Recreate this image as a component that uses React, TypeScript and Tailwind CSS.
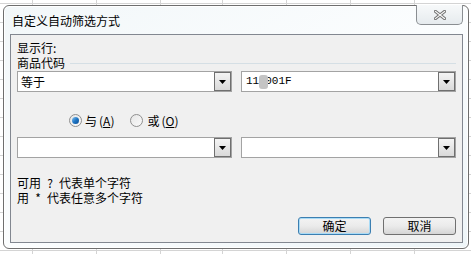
import React from "react";

const cjk = '"Noto Sans CJK SC", "Noto Sans", sans-serif';

function DropBtn() {
  return (
    <div className="w-[17px] h-[19px] shrink-0 border border-[#6f6f6f] bg-gradient-to-b from-[#f4f4f4] to-[#d9d9d9] flex items-center justify-center">
      <svg width="7" height="4" viewBox="0 0 7 4">
        <path d="M0 0H7L3.5 4Z" fill="#000" />
      </svg>
    </div>
  );
}

function Combo({ children }: { children?: React.ReactNode }) {
  return (
    <div className="w-[215px] h-[21px] border border-[#a3a3a3] bg-white flex items-center justify-between pl-[3px]">
      <div className="flex items-center text-[12px] leading-[14px] text-black">{children}</div>
      <DropBtn />
    </div>
  );
}

function Radio({ checked }: { checked?: boolean }) {
  return (
    <div className="w-[13px] h-[13px] rounded-full border border-[#8f8f8f] bg-gradient-to-br from-[#e6e6e6] to-[#fafafa] flex items-center justify-center">
      {checked && (
        <div className="w-[7px] h-[7px] rounded-full bg-gradient-to-br from-[#7fc4f2] via-[#1f76c4] to-[#0b4e95]" />
      )}
    </div>
  );
}

function Button({ label, focused }: { label: string; focused?: boolean }) {
  return (
    <div
      className={
        "w-[73px] h-[18px] rounded-[3px] border flex items-center justify-center text-[12px] leading-[14px] text-black bg-gradient-to-b from-[#f3f3f3] via-[#ebebeb] to-[#d5d5d5] " +
        (focused ? "border-[#3c7fb1] shadow-[inset_0_0_0_1px_#a9dbf6]" : "border-[#707070]")
      }
    >
      {label}
    </div>
  );
}

function Half({ children }: { children?: React.ReactNode }) {
  return <span className="inline-block w-[6px] text-center">{children}</span>;
}

function Grid() {
  const cols = [32, 96, 160, 222, 286, 350, 414];
  const rows: number[] = [];
  for (let y = 3; y < 254; y += 19) rows.push(y);
  return (
    <svg className="absolute inset-0" width="471" height="254">
      {cols.map((x) => (
        <line key={"c" + x} x1={x + 0.5} y1="0" x2={x + 0.5} y2="254" stroke="#d4d4d4" />
      ))}
      {rows.map((y) => (
        <line key={"r" + y} x1="0" y1={y + 0.5} x2="471" y2={y + 0.5} stroke="#d4d4d4" />
      ))}
    </svg>
  );
}

export default function App() {
  return (
    <div className="relative w-[471px] h-[254px] overflow-hidden bg-white" style={{ fontFamily: cjk }}>
      <Grid />
      {/* window */}
      <div className="absolute left-[3px] top-[5px] w-[466px] h-[244px] rounded-[6px] border border-[#6e6e6e] bg-gradient-to-br from-[#f2f7f9] via-[#fbfdfe] to-[#eef5f8] shadow-[inset_0_0_0_1px_#ffffff] flex flex-col pl-[6px] pr-[5px] pb-[5px]">
        {/* title bar */}
        <div className="relative h-[28px] shrink-0 flex items-center pl-[2px] pt-[1px]">
          <span className="text-[12px] leading-[14px] text-black">自定义自动筛选方式</span>
          <div className="absolute right-[0px] top-[-1px] w-[47px] h-[20px] rounded-b-[5px] border border-t-0 border-[#8a8e92] bg-gradient-to-b from-[#f7f9fa] to-[#e6ebee] flex items-center justify-center">
            <svg width="12" height="10" viewBox="0 0 12 10">
              <path d="M1.5 1.5L10.5 8.5M10.5 1.5L1.5 8.5" stroke="#737373" strokeWidth="3.2" strokeLinecap="square" />
              <path d="M1.5 1.5L10.5 8.5M10.5 1.5L1.5 8.5" stroke="#fafafa" strokeWidth="1.2" strokeLinecap="square" />
            </svg>
          </div>
        </div>
        {/* client */}
        <div className="flex-1 border border-[#828790] bg-[#f0f0f0] px-[6px] pt-[5px] flex flex-col text-[12px] leading-[15px] text-black">
          <div>显示行:</div>
          <div className="flex items-center">
            <span>商品代码</span>
            <div className="flex-1 h-px bg-[#d5dfe5] ml-[5px] mt-[1px]" />
          </div>
          <div className="flex gap-[9px] mt-[1px]">
            <Combo>等于</Combo>
            <Combo>
              <span className="relative pl-[1px]" style={{ fontFamily: '"Liberation Mono", monospace', fontSize: "11px" }}>
                11
                <span className="inline-block w-[9px] h-[14px] align-middle rounded-[3px] bg-[#c4c4c4] -mr-[3px] relative z-10" />
                001F
              </span>
            </Combo>
          </div>
          <div className="flex items-center mt-[20px] pl-[52px] h-[16px]">
            <Radio checked />
            <span className="ml-[3px]">
              与<span className="ml-[2px]">(</span>
              <span className="underline">A</span>)
            </span>
            <div className="ml-[16px]">
              <Radio />
            </div>
            <span className="ml-[4px]">
              或<span className="ml-[2px]">(</span>
              <span className="underline">O</span>)
            </span>
          </div>
          <div className="flex gap-[9px] mt-[9px]">
            <Combo />
            <Combo />
          </div>
          <div className="mt-[17px] flex">
            <span>可用</span>
            <Half />
            <Half>?</Half>
            <Half />
            <span>代表单个字符</span>
          </div>
          <div className="flex">
            <span>用</span>
            <Half />
            <Half>*</Half>
            <Half />
            <span>代表任意多个字符</span>
          </div>
          <div className="flex justify-end gap-[12px] mt-[12px]">
            <Button label="确定" focused />
            <Button label="取消" />
          </div>
        </div>
      </div>
    </div>
  );
}
